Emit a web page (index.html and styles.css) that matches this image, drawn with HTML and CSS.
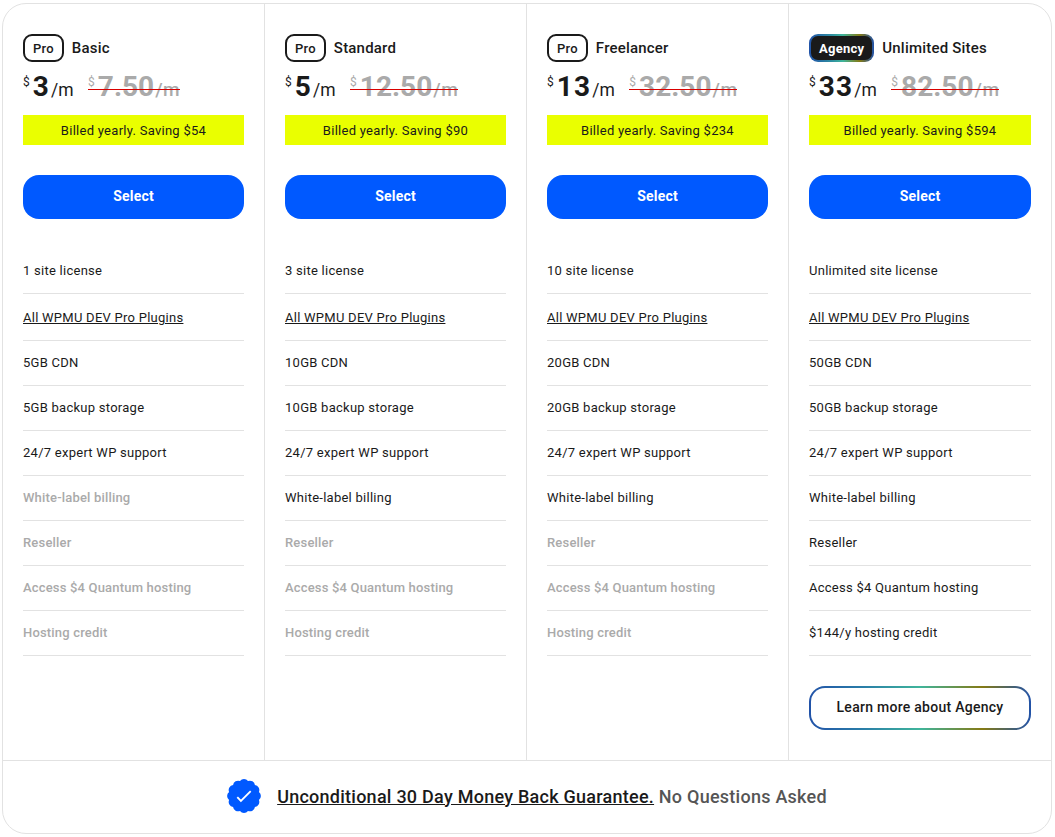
FILE: index.html
```html
<!DOCTYPE html>
<html lang="en">
<head>
<meta charset="utf-8">
<title>Pricing</title>
<link rel="stylesheet" href="styles.css">
</head>
<body>
<main class="card">
  <div class="plans">
    <section class="plan">
      <div class="head"><span class="badge">Pro</span><span class="name">Basic</span></div>
      <div class="price"><span class="now"><sup>$</sup><b>3</b><i>/m</i></span><span class="old"><sup>$</sup><b>7.50</b><i>/m</i></span></div>
      <div class="bill">Billed yearly. Saving $54</div>
      <a class="select">Select</a>
      <ul class="feats">
        <li>1 site license</li>
        <li class="link"><a>All WPMU DEV Pro Plugins</a></li>
        <li>5GB CDN</li>
        <li>5GB backup storage</li>
        <li>24/7 expert WP support</li>
        <li class="off">White-label billing</li>
        <li class="off">Reseller</li>
        <li class="off">Access $4 Quantum hosting</li>
        <li class="off">Hosting credit</li>
      </ul>
    </section>
    <section class="plan">
      <div class="head"><span class="badge">Pro</span><span class="name">Standard</span></div>
      <div class="price"><span class="now"><sup>$</sup><b>5</b><i>/m</i></span><span class="old"><sup>$</sup><b>12.50</b><i>/m</i></span></div>
      <div class="bill">Billed yearly. Saving $90</div>
      <a class="select">Select</a>
      <ul class="feats">
        <li>3 site license</li>
        <li class="link"><a>All WPMU DEV Pro Plugins</a></li>
        <li>10GB CDN</li>
        <li>10GB backup storage</li>
        <li>24/7 expert WP support</li>
        <li>White-label billing</li>
        <li class="off">Reseller</li>
        <li class="off">Access $4 Quantum hosting</li>
        <li class="off">Hosting credit</li>
      </ul>
    </section>
    <section class="plan">
      <div class="head"><span class="badge">Pro</span><span class="name">Freelancer</span></div>
      <div class="price"><span class="now"><sup>$</sup><b>13</b><i>/m</i></span><span class="old"><sup>$</sup><b>32.50</b><i>/m</i></span></div>
      <div class="bill">Billed yearly. Saving $234</div>
      <a class="select">Select</a>
      <ul class="feats">
        <li>10 site license</li>
        <li class="link"><a>All WPMU DEV Pro Plugins</a></li>
        <li>20GB CDN</li>
        <li>20GB backup storage</li>
        <li>24/7 expert WP support</li>
        <li>White-label billing</li>
        <li class="off">Reseller</li>
        <li class="off">Access $4 Quantum hosting</li>
        <li class="off">Hosting credit</li>
      </ul>
    </section>
    <section class="plan">
      <div class="head"><span class="badge agency"><span>Agency</span></span><span class="name">Unlimited Sites</span></div>
      <div class="price"><span class="now"><sup>$</sup><b>33</b><i>/m</i></span><span class="old"><sup>$</sup><b>82.50</b><i>/m</i></span></div>
      <div class="bill">Billed yearly. Saving $594</div>
      <a class="select">Select</a>
      <ul class="feats">
        <li>Unlimited site license</li>
        <li class="link"><a>All WPMU DEV Pro Plugins</a></li>
        <li>50GB CDN</li>
        <li>50GB backup storage</li>
        <li>24/7 expert WP support</li>
        <li>White-label billing</li>
        <li>Reseller</li>
        <li>Access $4 Quantum hosting</li>
        <li>$144/y hosting credit</li>
      </ul>
      <a class="learn">Learn more about Agency</a>
    </section>
  </div>
  <footer class="foot">
    <svg class="seal" width="34" height="34" viewBox="0.5 0.5 33 33" aria-hidden="true">
      <path fill="#0059ff" d="M20.88 2.51A4.9 4.9 0 0 1 27.61 6.39A4.9 4.9 0 0 1 31.49 13.12A4.9 4.9 0 0 1 31.49 20.88A4.9 4.9 0 0 1 27.61 27.61A4.9 4.9 0 0 1 20.88 31.49A4.9 4.9 0 0 1 13.12 31.49A4.9 4.9 0 0 1 6.39 27.61A4.9 4.9 0 0 1 2.51 20.88A4.9 4.9 0 0 1 2.51 13.12A4.9 4.9 0 0 1 6.39 6.39A4.9 4.9 0 0 1 13.12 2.51A4.9 4.9 0 0 1 20.88 2.51Z"/>
      <path fill="none" stroke="#fff" stroke-width="1.8" d="M10.5 18l3.5 3.7 9.5-9.4"/>
    </svg>
    <p class="guarantee"><a>Unconditional 30 Day Money Back Guarantee.</a> <span>No Questions Asked</span></p>
  </footer>
</main>
</body>
</html>
```
FILE: styles.css
```css
* { box-sizing: border-box; }
html, body { margin: 0; background: #fff; }
body {
  padding: 3px 3px 3px 2px;
  font-family: Roboto, "Liberation Sans", sans-serif;
  color: #1a1a1a;
}
a { color: inherit; }
.card {
  width: 1050px;
  height: 831px;
  border: 1px solid #e2e2e2;
  border-radius: 24px;
  display: flex;
  flex-direction: column;
}
.plans {
  display: grid;
  grid-template-columns: repeat(4, 262px);
  height: 756px;
}
.plan {
  padding: 30px 20px 0;
  border-right: 1px solid #e2e2e2;
}
.plan:last-child { border-right: 0; }
.head {
  display: flex;
  align-items: center;
  gap: 8px;
  height: 28px;
}
.badge {
  height: 28px;
  padding: 0 8px;
  border: 2px solid #1a1a1a;
  border-radius: 9px;
  font-size: 13px;
  font-weight: 500;
  letter-spacing: .25px;
  display: flex;
  align-items: center;
}
.badge.agency {
  padding: 2px;
  border: 0;
  color: #fff;
  background: linear-gradient(90deg, #2152a8 0%, #2f8fa0 35%, #3fb59b 52%, #857a14 78%, #2152a8 100%);
}
.badge.agency span {
  height: 24px;
  padding: 0 8px;
  background: #1a1a1a;
  border-radius: 7px;
  font-weight: 700;
  display: flex;
  align-items: center;
}
.name {
  font-size: 15px;
  font-weight: 500;
  letter-spacing: .2px;
}
.price {
  display: flex;
  align-items: baseline;
  gap: 14.5px;
  height: 53px;
  padding-top: 6px;
  line-height: 38px;
}
.now, .old { display: inline-flex; align-items: baseline; white-space: nowrap; }
.price sup { font-size: 12px; line-height: 1; align-self: flex-start; margin: 8px 3px 0 0; font-weight: 400; }
.price b { font-size: 28px; font-weight: 700; }
.now b { letter-spacing: 1.2px; }
.price i { font-style: normal; font-size: 17.5px; font-weight: 400; margin-left: 1px; }
.old {
  position: relative;
  color: #aaa;
}
.old i { font-size: 19px; font-weight: 500; margin-left: 1px; letter-spacing: .5px; }
.old::after {
  content: "";
  position: absolute;
  left: 0;
  right: 0;
  top: 21px;
  height: 1px;
  background: #d90000;
}
.bill {
  height: 30px;
  background: #eaff00;
  font-size: 13px;
  letter-spacing: .27px;
  display: flex;
  align-items: center;
  justify-content: center;
}
.select {
  margin-top: 30px;
  height: 44px;
  padding-bottom: 2px;
  background: #0059ff;
  color: #fff;
  border-radius: 16px;
  font-size: 14px;
  font-weight: 700;
  letter-spacing: .2px;
  display: flex;
  align-items: center;
  justify-content: center;
}
.feats {
  list-style: none;
  margin: 29px 0 0;
  padding: 0;
}
.feats li {
  height: 45px;
  padding-bottom: 2px;
  border-bottom: 1px solid #e2e2e2;
  font-size: 13px;
  letter-spacing: .26px;
  display: flex;
  align-items: center;
}
.feats li:first-child { height: 46px; padding-bottom: 1px; }
.feats li.link { height: 47px; padding: 1px 0 0; }
.feats li.link a { text-decoration: underline; }
.feats li.off { color: #aaa; font-weight: 500; letter-spacing: .18px; }
.learn {
  margin-top: 30px;
  height: 44px;
  padding-bottom: 2px;
  border-radius: 16px;
  border: 2px solid transparent;
  background:
    linear-gradient(#fff, #fff) padding-box,
    linear-gradient(90deg, #2152a8 0%, #2a7fa8 25%, #3fb59b 50%, #857a14 78%, #2152a8 100%) border-box;
  font-size: 14px;
  font-weight: 500;
  letter-spacing: .27px;
  display: flex;
  align-items: center;
  justify-content: center;
}
.foot {
  flex: 1;
  padding-bottom: 2px;
  border-top: 1px solid #e2e2e2;
  display: flex;
  align-items: center;
  justify-content: center;
  gap: 16px;
}
.seal { display: block; }
.guarantee {
  margin: 0;
  font-size: 18px;
  font-weight: 500;
  letter-spacing: .25px;
  white-space: nowrap;
}
.guarantee a { text-decoration: underline; }
.guarantee span { color: #555; }
```
